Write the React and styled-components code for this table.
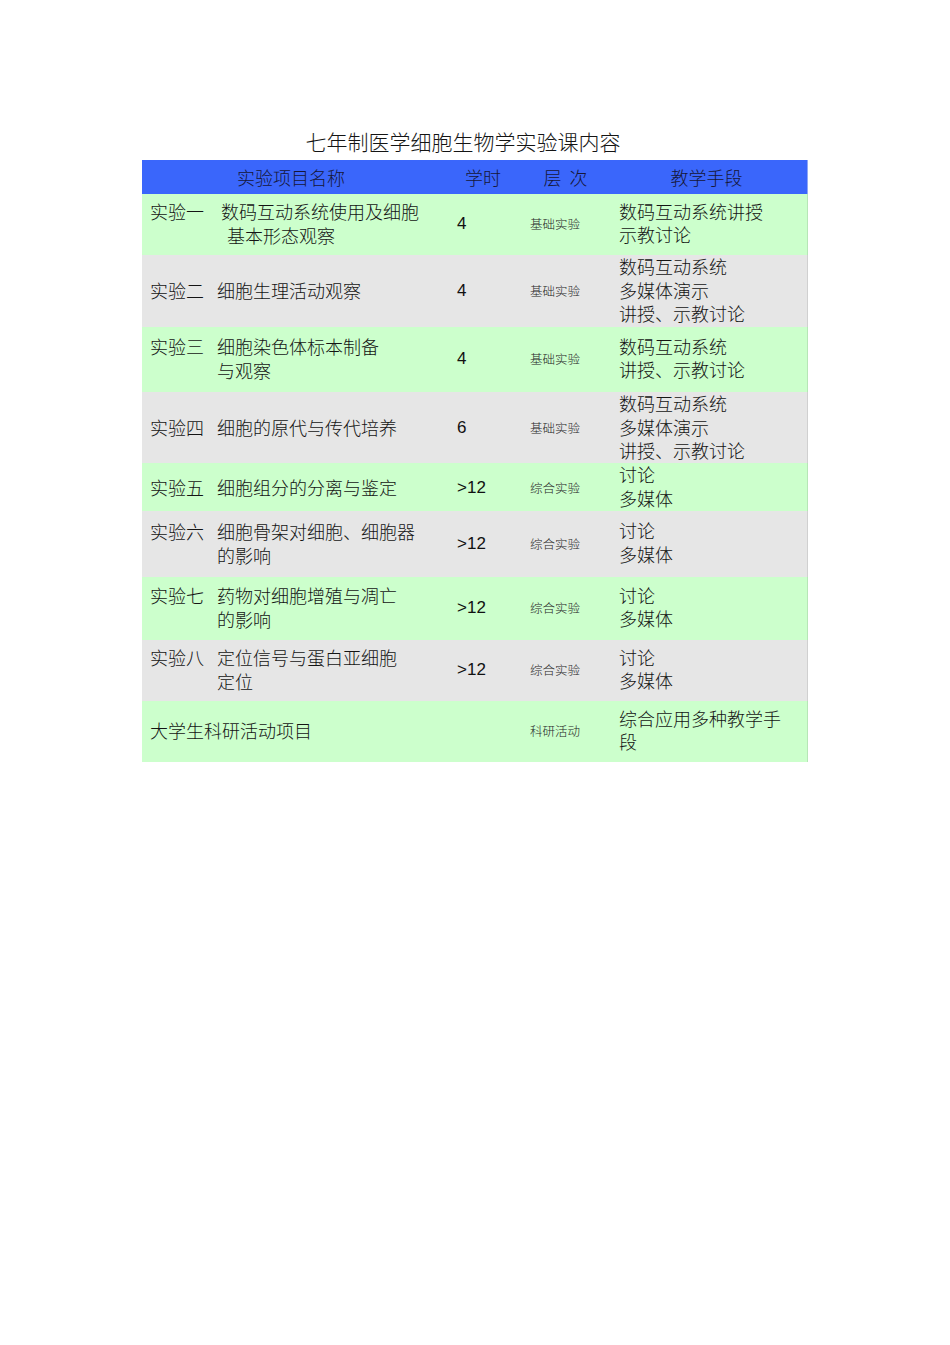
import React from "react";
import styled, { createGlobalStyle } from "styled-components";

const Global = createGlobalStyle`
  html, body { margin: 0; padding: 0; background: #ffffff; }
  body {
    font-family: "Noto Sans CJK SC", "Noto Sans", sans-serif;
    color: #141414;
  }
`;

const Page = styled.div`
  width: 950px;
  min-height: 1345px;
  padding: 128px 0 0 142px;
  box-sizing: border-box;
`;

const Title = styled.h1`
  width: 666px;
  margin: 0 0 6px 0;
  padding-right: 24px;
  box-sizing: border-box;
  text-align: center;
  font-size: 21px;
  line-height: 26px;
  font-weight: 300;
  color: #141414;
`;

const Table = styled.div`
  width: 666px;
  display: flex;
  flex-direction: column;
`;

const cols = "298px 86px 79px 203px";

const HeaderRow = styled.div`
  display: grid;
  grid-template-columns: ${cols};
  height: 34px;
  align-items: center;
  background: #3a66fb;
  box-shadow: inset -1px 0 0 #8fa6f5;
`;

const HeadCell = styled.div`
  text-align: center;
  font-size: 18px;
  line-height: 24px;
  font-weight: 300;
  color: #161638;
  white-space: pre;
`;

const Row = styled.div`
  display: grid;
  grid-template-columns: ${cols};
  height: ${(p) => p.$h}px;
  box-sizing: border-box;
  padding-bottom: 3px;
  align-items: center;
  background: ${(p) => (p.$tone === "green" ? "#ccffcc" : "#e6e6e6")};
  box-shadow: inset -1px 0 0 ${(p) => (p.$tone === "green" ? "#b6e6b6" : "#d0d0d0")};
`;

const NameCell = styled.div`
  display: flex;
  align-items: flex-start;
  padding-left: 8px;
  font-size: 18px;
  line-height: 24px;
  font-weight: 300;
`;

const Label = styled.span`
  flex: 0 0 67px;
  white-space: nowrap;
`;

const Lines = styled.div`
  display: flex;
  flex-direction: column;
  padding-left: ${(p) => p.$shift || 0}px;
`;

const Line = styled.span`
  display: block;
  white-space: nowrap;
  padding-left: ${(p) => p.$indent || 0}px;
`;

const HoursCell = styled.div`
  padding-left: 17px;
  padding-top: 2px;
  font-family: "Liberation Sans", Arial, sans-serif;
  font-size: 17px;
  line-height: 24px;
  color: #111;
`;

const LevelCell = styled.div`
  padding-left: 4px;
  padding-top: 2px;
  font-size: 12.5px;
  line-height: 18px;
  font-weight: 300;
  color: #262626;
  white-space: nowrap;
`;

const MethodCell = styled.div`
  padding-left: 14px;
  font-size: 18px;
  line-height: 23.5px;
  font-weight: 300;
  display: flex;
  flex-direction: column;
`;

const rows = [
  { tone: "green", h: 61, label: "实验一", shift: 4, name: ["数码互动系统使用及细胞", "基本形态观察"], indent2: 6, hours: "4", level: "基础实验", method: ["数码互动系统讲授", "示教讨论"] },
  { tone: "gray", h: 72, label: "实验二", name: ["细胞生理活动观察"], hours: "4", level: "基础实验", method: ["数码互动系统", "多媒体演示", "讲授、示教讨论"] },
  { tone: "green", h: 65, label: "实验三", name: ["细胞染色体标本制备", "与观察"], hours: "4", level: "基础实验", method: ["数码互动系统", "讲授、示教讨论"] },
  { tone: "gray", h: 71, label: "实验四", name: ["细胞的原代与传代培养"], hours: "6", level: "基础实验", method: ["数码互动系统", "多媒体演示", "讲授、示教讨论"] },
  { tone: "green", h: 48, label: "实验五", name: ["细胞组分的分离与鉴定"], hours: ">12", level: "综合实验", method: ["讨论", "多媒体"] },
  { tone: "gray", h: 66, label: "实验六", name: ["细胞骨架对细胞、细胞器", "的影响"], hours: ">12", level: "综合实验", method: ["讨论", "多媒体"] },
  { tone: "green", h: 63, label: "实验七", name: ["药物对细胞增殖与凋亡", "的影响"], hours: ">12", level: "综合实验", method: ["讨论", "多媒体"] },
  { tone: "gray", h: 61, label: "实验八", name: ["定位信号与蛋白亚细胞", "定位"], hours: ">12", level: "综合实验", method: ["讨论", "多媒体"] },
  { tone: "green", h: 61, label: null, name: ["大学生科研活动项目"], hours: "", level: "科研活动", method: ["综合应用多种教学手", "段"] },
];

export default function App() {
  return (
    <Page>
      <Global />
      <Title>七年制医学细胞生物学实验课内容</Title>
      <Table>
        <HeaderRow>
          <HeadCell>实验项目名称</HeadCell>
          <HeadCell>学时</HeadCell>
          <HeadCell>{"层  次"}</HeadCell>
          <HeadCell>教学手段</HeadCell>
        </HeaderRow>
        {rows.map((r, i) => (
          <Row key={i} $tone={r.tone} $h={r.h}>
            <NameCell>
              {r.label && <Label>{r.label}</Label>}
              <Lines $shift={r.shift}>
                {r.name.map((n, j) => (
                  <Line key={j} $indent={j > 0 ? r.indent2 : 0}>{n}</Line>
                ))}
              </Lines>
            </NameCell>
            <HoursCell>{r.hours}</HoursCell>
            <LevelCell>{r.level}</LevelCell>
            <MethodCell>
              {r.method.map((m, j) => (
                <Line key={j}>{m}</Line>
              ))}
            </MethodCell>
          </Row>
        ))}
      </Table>
    </Page>
  );
}
